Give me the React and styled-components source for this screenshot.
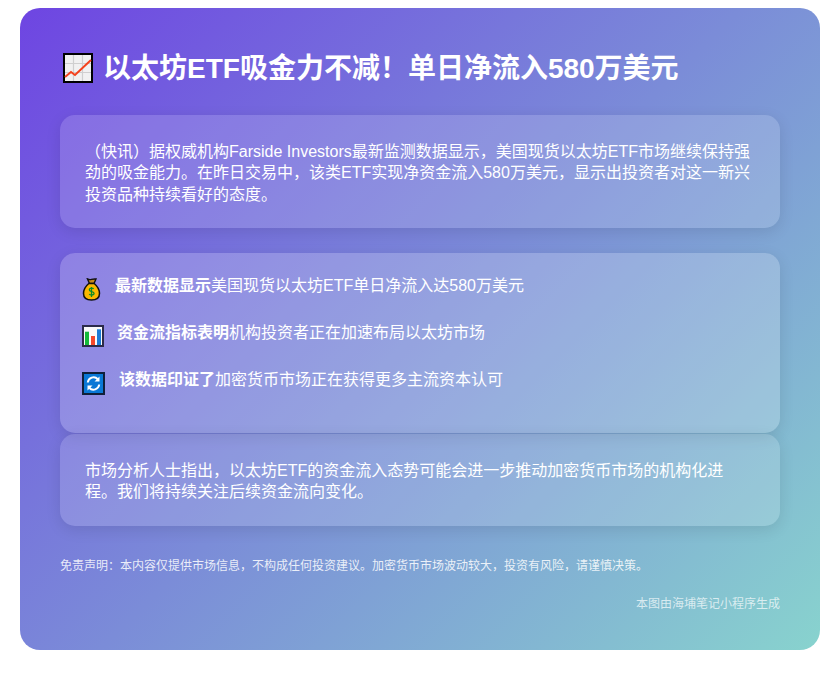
import React from "react";
import styled, { createGlobalStyle } from "styled-components";

const Global = createGlobalStyle`
  html, body { margin: 0; padding: 0; background: #fff; }
  body { font-family: "Liberation Sans", "Noto Sans CJK SC", Arial, sans-serif; }
`;

const Page = styled.div`
  padding: 8px 20px 32px;
`;

const Poster = styled.main`
  width: 800px;
  height: 642px;
  box-sizing: border-box;
  padding: 40px;
  border-radius: 20px;
  color: #fff;
  background: linear-gradient(135deg, #6e45e2 0%, #88d3ce 100%);
`;

const Title = styled.h1`
  display: flex;
  align-items: center;
  gap: 10px;
  margin: 0 0 27px;
  padding-left: 3px;
  height: 40px;
  font-size: 28px;
  line-height: 40px;
  font-weight: 700;
`;

const TitleText = styled.span`
  padding-top: 2px;
`;

const Panel = styled.section`
  box-sizing: border-box;
  height: ${(p) => p.$height}px;
  margin-bottom: ${(p) => p.$after}px;
  padding: 26px 25px 0;
  border-radius: 15px;
  background: rgba(255, 255, 255, ${(p) => p.$alpha});
  box-shadow: 0 4px 15px rgba(0, 0, 0, 0.1);
  font-size: 16px;
  line-height: 21.33px;
`;

const List = styled.ul`
  display: flex;
  flex-direction: column;
  gap: 11px;
  margin: -1px 0 0 -3px;
  padding: 0;
  list-style: none;
`;

const Item = styled.li`
  display: flex;
  align-items: flex-start;
  gap: ${(p) => p.$gap}px;
  height: 36px;
`;

const ItemText = styled.span`
  padding-top: 1px;
  line-height: 14px;
`;

const Disclaimer = styled.p`
  margin: 32px 0 0;
  font-size: 12px;
  line-height: 17px;
  color: rgba(255, 255, 255, 0.85);
`;

const Credit = styled.p`
  margin: 21px 0 0;
  font-size: 12px;
  line-height: 17px;
  text-align: right;
  color: rgba(255, 255, 255, 0.7);
`;

const IconSvg = styled.svg`
  flex: none;
`;

const ChartUp = () => (
  <IconSvg width="30" height="30" viewBox="0 0 30 30">
    <rect x="1" y="1" width="28" height="28" fill="#f1f1f1" stroke="#000" strokeWidth="2" />
    <path d="M10.500 2v26M19.500 2v26M2 10.500h26M2 19.500h26" stroke="#cfcfcf" strokeWidth="1.200" fill="none" />
    <path d="M2 24l6-5 4 3L28 7" stroke="#f4421c" strokeWidth="2" fill="none" />
  </IconSvg>
);

const MoneyBag = () => (
  <IconSvg width="22" height="23" viewBox="0 0 22 23">
    <path d="M5.500 1c1.800.9 2.600.9 4 .4s2.700-.5 4.500-.4l-2 4.500H7.500z" fill="#c98a1b" stroke="#111" strokeWidth="1.400" />
    <path d="M6.800 5.500h5.400c3 2.500 5.300 6 5.300 10 0 4.500-3.300 6.500-8 6.500s-8-2-8-6.500c0-4 2.300-7.500 5.300-10z" fill="#fbb800" stroke="#111" strokeWidth="1.500" />
    <path d="M11.700 10.800c-1-1-4.400-1-4.400.9 0 2.400 4.800 1.400 4.800 3.800 0 1.900-4 1.900-4.900.7M9.500 9v10" stroke="#0c8a28" strokeWidth="1.300" fill="none" />
  </IconSvg>
);

const BarChart = () => (
  <IconSvg width="22" height="22" viewBox="0 0 22 22">
    <rect x="1" y="1" width="20" height="20" fill="#fafafa" stroke="#2b2b4a" strokeWidth="2" />
    <rect x="3" y="6.700" width="4" height="13.300" fill="#15b93a" />
    <rect x="9" y="11" width="4" height="9" fill="#f5472a" />
    <rect x="15" y="4.300" width="4" height="15.700" fill="#1b7bd6" />
  </IconSvg>
);

const Sync = () => (
  <IconSvg width="23" height="23" viewBox="0 0 23 23">
    <rect x="1" y="1" width="21" height="21" fill="#0a78d6" stroke="#10203a" strokeWidth="2" />
    <path d="M5.800 10.500a5.800 5.800 0 0 1 10-3.300M17.200 12.500a5.800 5.800 0 0 1-10 3.300" stroke="#fff" strokeWidth="2" fill="none" />
    <path d="M17.500 4.500v5h-5zM5.500 18.500v-5h5z" fill="#fff" />
  </IconSvg>
);

const points = [
  { Icon: MoneyBag, gap: 11, bold: "最新数据显示", rest: "美国现货以太坊ETF单日净流入达580万美元" },
  { Icon: BarChart, gap: 13, bold: "资金流指标表明", rest: "机构投资者正在加速布局以太坊市场" },
  { Icon: Sync, gap: 14, bold: "该数据印证了", rest: "加密货币市场正在获得更多主流资本认可" },
];

export default function App() {
  return (
    <Page>
      <Global />
      <Poster>
        <Title>
          <ChartUp />
          <TitleText>以太坊ETF吸金力不减！单日净流入580万美元</TitleText>
        </Title>
        <Panel $height={113} $after={25} $alpha={0.15}>
          （快讯）据权威机构Farside Investors最新监测数据显示，美国现货以太坊ETF市场继续保持强劲的吸金能力。在昨日交易中，该类ETF实现净资金流入580万美元，显示出投资者对这一新兴投资品种持续看好的态度。
        </Panel>
        <Panel $height={180} $after={1} $alpha={0.2}>
          <List>
            {points.map(({ Icon, gap, bold, rest }) => (
              <Item key={bold} $gap={gap}>
                <Icon />
                <ItemText>
                  <strong>{bold}</strong>
                  {rest}
                </ItemText>
              </Item>
            ))}
          </List>
        </Panel>
        <Panel $height={92} $after={0} $alpha={0.15}>
          市场分析人士指出，以太坊ETF的资金流入态势可能会进一步推动加密货币市场的机构化进程。我们将持续关注后续资金流向变化。
        </Panel>
        <Disclaimer>免责声明：本内容仅提供市场信息，不构成任何投资建议。加密货币市场波动较大，投资有风险，请谨慎决策。</Disclaimer>
        <Credit>本图由海埔笔记小程序生成</Credit>
      </Poster>
    </Page>
  );
}
